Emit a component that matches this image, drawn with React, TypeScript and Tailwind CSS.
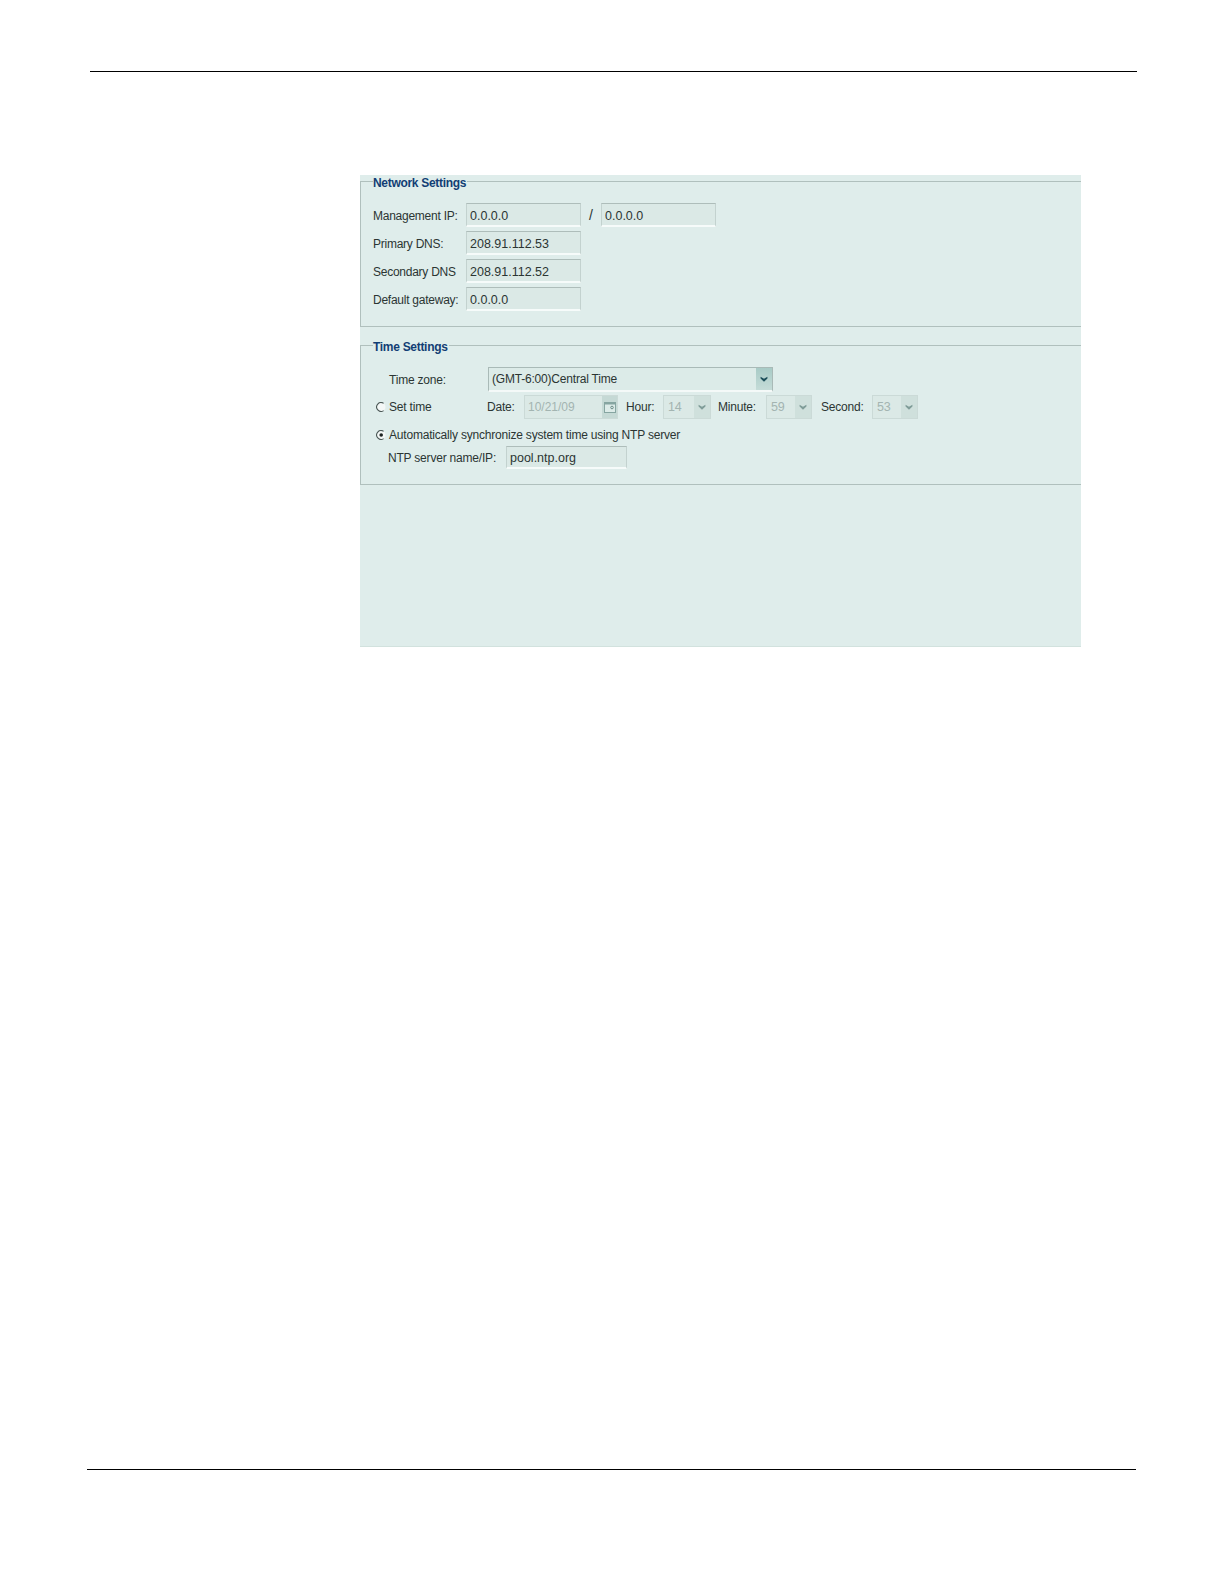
import type { ReactNode } from 'react';

function Field({ value, width, muted }: { value: string; width: string; muted?: boolean }) {
  return (
    <input
      readOnly
      value={value}
      className={`${width} h-full min-w-0 border border-[#c3d2cf] border-t-[#aebdba] border-b-2 border-b-[#f6fbfa] bg-[#dbe9e6] pt-[2px] pl-[3px] text-[12.5px] outline-none ${muted ? 'text-[#a3b4b1]' : 'text-[#2b3533]'}`}
    />
  );
}

function Arrow({ muted }: { muted?: boolean }) {
  return (
    <svg viewBox="0 0 9 7" className="h-[6px] w-[8px]">
      <path d="M0.5 0.8 L4.5 3.2 L8.5 0.8 V3 L4.5 6.6 L0.5 3 Z" fill={muted ? '#7f9c98' : '#1d4f5a'} />
    </svg>
  );
}

function SmallSelect({ value, width }: { value: string; width: string }) {
  return (
    <div className={`${width} flex h-full border border-[#cbdad7] bg-[#dbe9e6]`}>
      <span className="flex-1 pl-[4px] text-[12.5px] leading-[23px] text-[#a3b4b1]">{value}</span>
      <span className="flex w-[16px] items-center justify-center bg-[#cfe0dc]">
        <Arrow muted />
      </span>
    </div>
  );
}

function Radio({ checked }: { checked?: boolean }) {
  return (
    <svg viewBox="0 0 10 10" className="h-[10px] w-[10px] shrink-0">
      <circle cx="5" cy="5" r="4.5" fill="#f4f8f7" />
      <path d="M7.6 1.4 A4.4 4.4 0 1 0 7.6 8.6" fill="none" stroke="#4d5a58" strokeWidth="1.1" />
      {checked && <circle cx="5.2" cy="5" r="1.8" fill="#1c2322" />}
    </svg>
  );
}

function Group({ title, children, className }: { title: string; children: ReactNode; className: string }) {
  return (
    <fieldset className={`border-y border-l border-[#b0c0bd] ${className}`}>
      <legend className="ml-[12px] h-[13px] pr-[1px] text-[12px] leading-[16px] font-bold tracking-[-0.3px] text-[#123e74]">{title}</legend>
      {children}
    </fieldset>
  );
}

function NetRow({ label, value, children }: { label: string; value: string; children?: ReactNode }) {
  return (
    <div className="flex h-[24px] items-center pl-[12px]">
      <span className="w-[93px] pt-px text-[12px] tracking-[-0.25px]">{label}</span>
      <Field value={value} width="w-[115px]" />
      {children}
    </div>
  );
}

export default function App() {
  return (
    <div className="h-[1584px] overflow-hidden bg-white pt-[71px] font-['Liberation_Sans',Arial,sans-serif] text-[#2b3533]">
      <div className="ml-[90px] h-px w-[1047px] bg-black" />

      <div className="mt-[103px] ml-[360px] h-[472px] w-[721px] border-b border-b-[#d2e2de] bg-[#dfedeb]">
        <Group title="Network Settings" className="pb-[15px]">
          <div className="mt-[15px] flex flex-col gap-[4px]">
            <NetRow label="Management IP:" value="0.0.0.0">
              <span className="ml-[8px] w-[12px] text-[14px]">/</span>
              <Field value="0.0.0.0" width="w-[115px]" />
            </NetRow>
            <NetRow label="Primary DNS:" value="208.91.112.53" />
            <NetRow label="Secondary DNS" value="208.91.112.52" />
            <NetRow label="Default gateway:" value="0.0.0.0" />
          </div>
        </Group>

        <Group title="Time Settings" className="mt-[12px] pb-[15px]">
          <div className="mt-[15px] flex h-[25px] items-center pl-[28px] text-[12px] tracking-[-0.2px]">
            <span className="w-[99px]">Time zone:</span>
            <div className="flex h-full w-[285px] border border-[#a9bab7] border-b-2 border-b-[#f4f9f8] bg-[#dcebe8]">
              <span className="flex-1 pl-[3px] text-[12px] leading-[23px] tracking-[-0.2px]">(GMT-6:00)Central Time</span>
              <span className="flex w-[16px] items-center justify-center bg-gradient-to-b from-[#a8cbc6] to-[#c5dcd8]">
                <Arrow />
              </span>
            </div>
          </div>

          <div className="mt-[3px] flex h-[24px] items-center pl-[15px] text-[12px] leading-[26px] tracking-[-0.2px]">
            <Radio />
            <span className="ml-[3px] w-[98px]">Set time</span>
            <span className="w-[37px]">Date:</span>
            <div className="flex h-full w-[94px] border border-[#cbdad7] bg-[#dbe9e6] tracking-normal">
              <span className="flex-1 pl-[3px] text-[12px] leading-[23px] text-[#a3b4b1]">10/21/09</span>
              <span className="flex w-[15px] items-center justify-center bg-[#c5d9d5]">
                <svg viewBox="0 0 12 12" className="h-[12px] w-[12px]">
                  <rect x="0.5" y="1.5" width="11" height="10" fill="#dcebe8" stroke="#86a5a1" />
                  <rect x="0.5" y="1.5" width="11" height="2" fill="#86a5a1" />
                  <circle cx="8" cy="6.5" r="1.3" fill="none" stroke="#6d8c88" />
                </svg>
              </span>
            </div>
            <span className="ml-[8px] w-[37px]">Hour:</span>
            <SmallSelect value="14" width="w-[48px]" />
            <span className="ml-[7px] w-[48px]">Minute:</span>
            <SmallSelect value="59" width="w-[46px]" />
            <span className="ml-[9px] w-[51px]">Second:</span>
            <SmallSelect value="53" width="w-[46px]" />
          </div>

          <div className="mt-[8px] flex h-[16px] items-center pl-[15px] text-[12px] tracking-[-0.2px]">
            <Radio checked />
            <span className="ml-[3px]">Automatically synchronize system time using NTP server</span>
          </div>

          <div className="mt-[3px] flex h-[23px] items-center pl-[27px]">
            <span className="w-[118px] text-[12px] tracking-[-0.2px]">NTP server name/IP:</span>
            <Field value="pool.ntp.org" width="w-[121px]" />
          </div>
        </Group>
      </div>

      <div className="mt-[822px] ml-[87px] h-px w-[1049px] bg-black" />
    </div>
  );
}
